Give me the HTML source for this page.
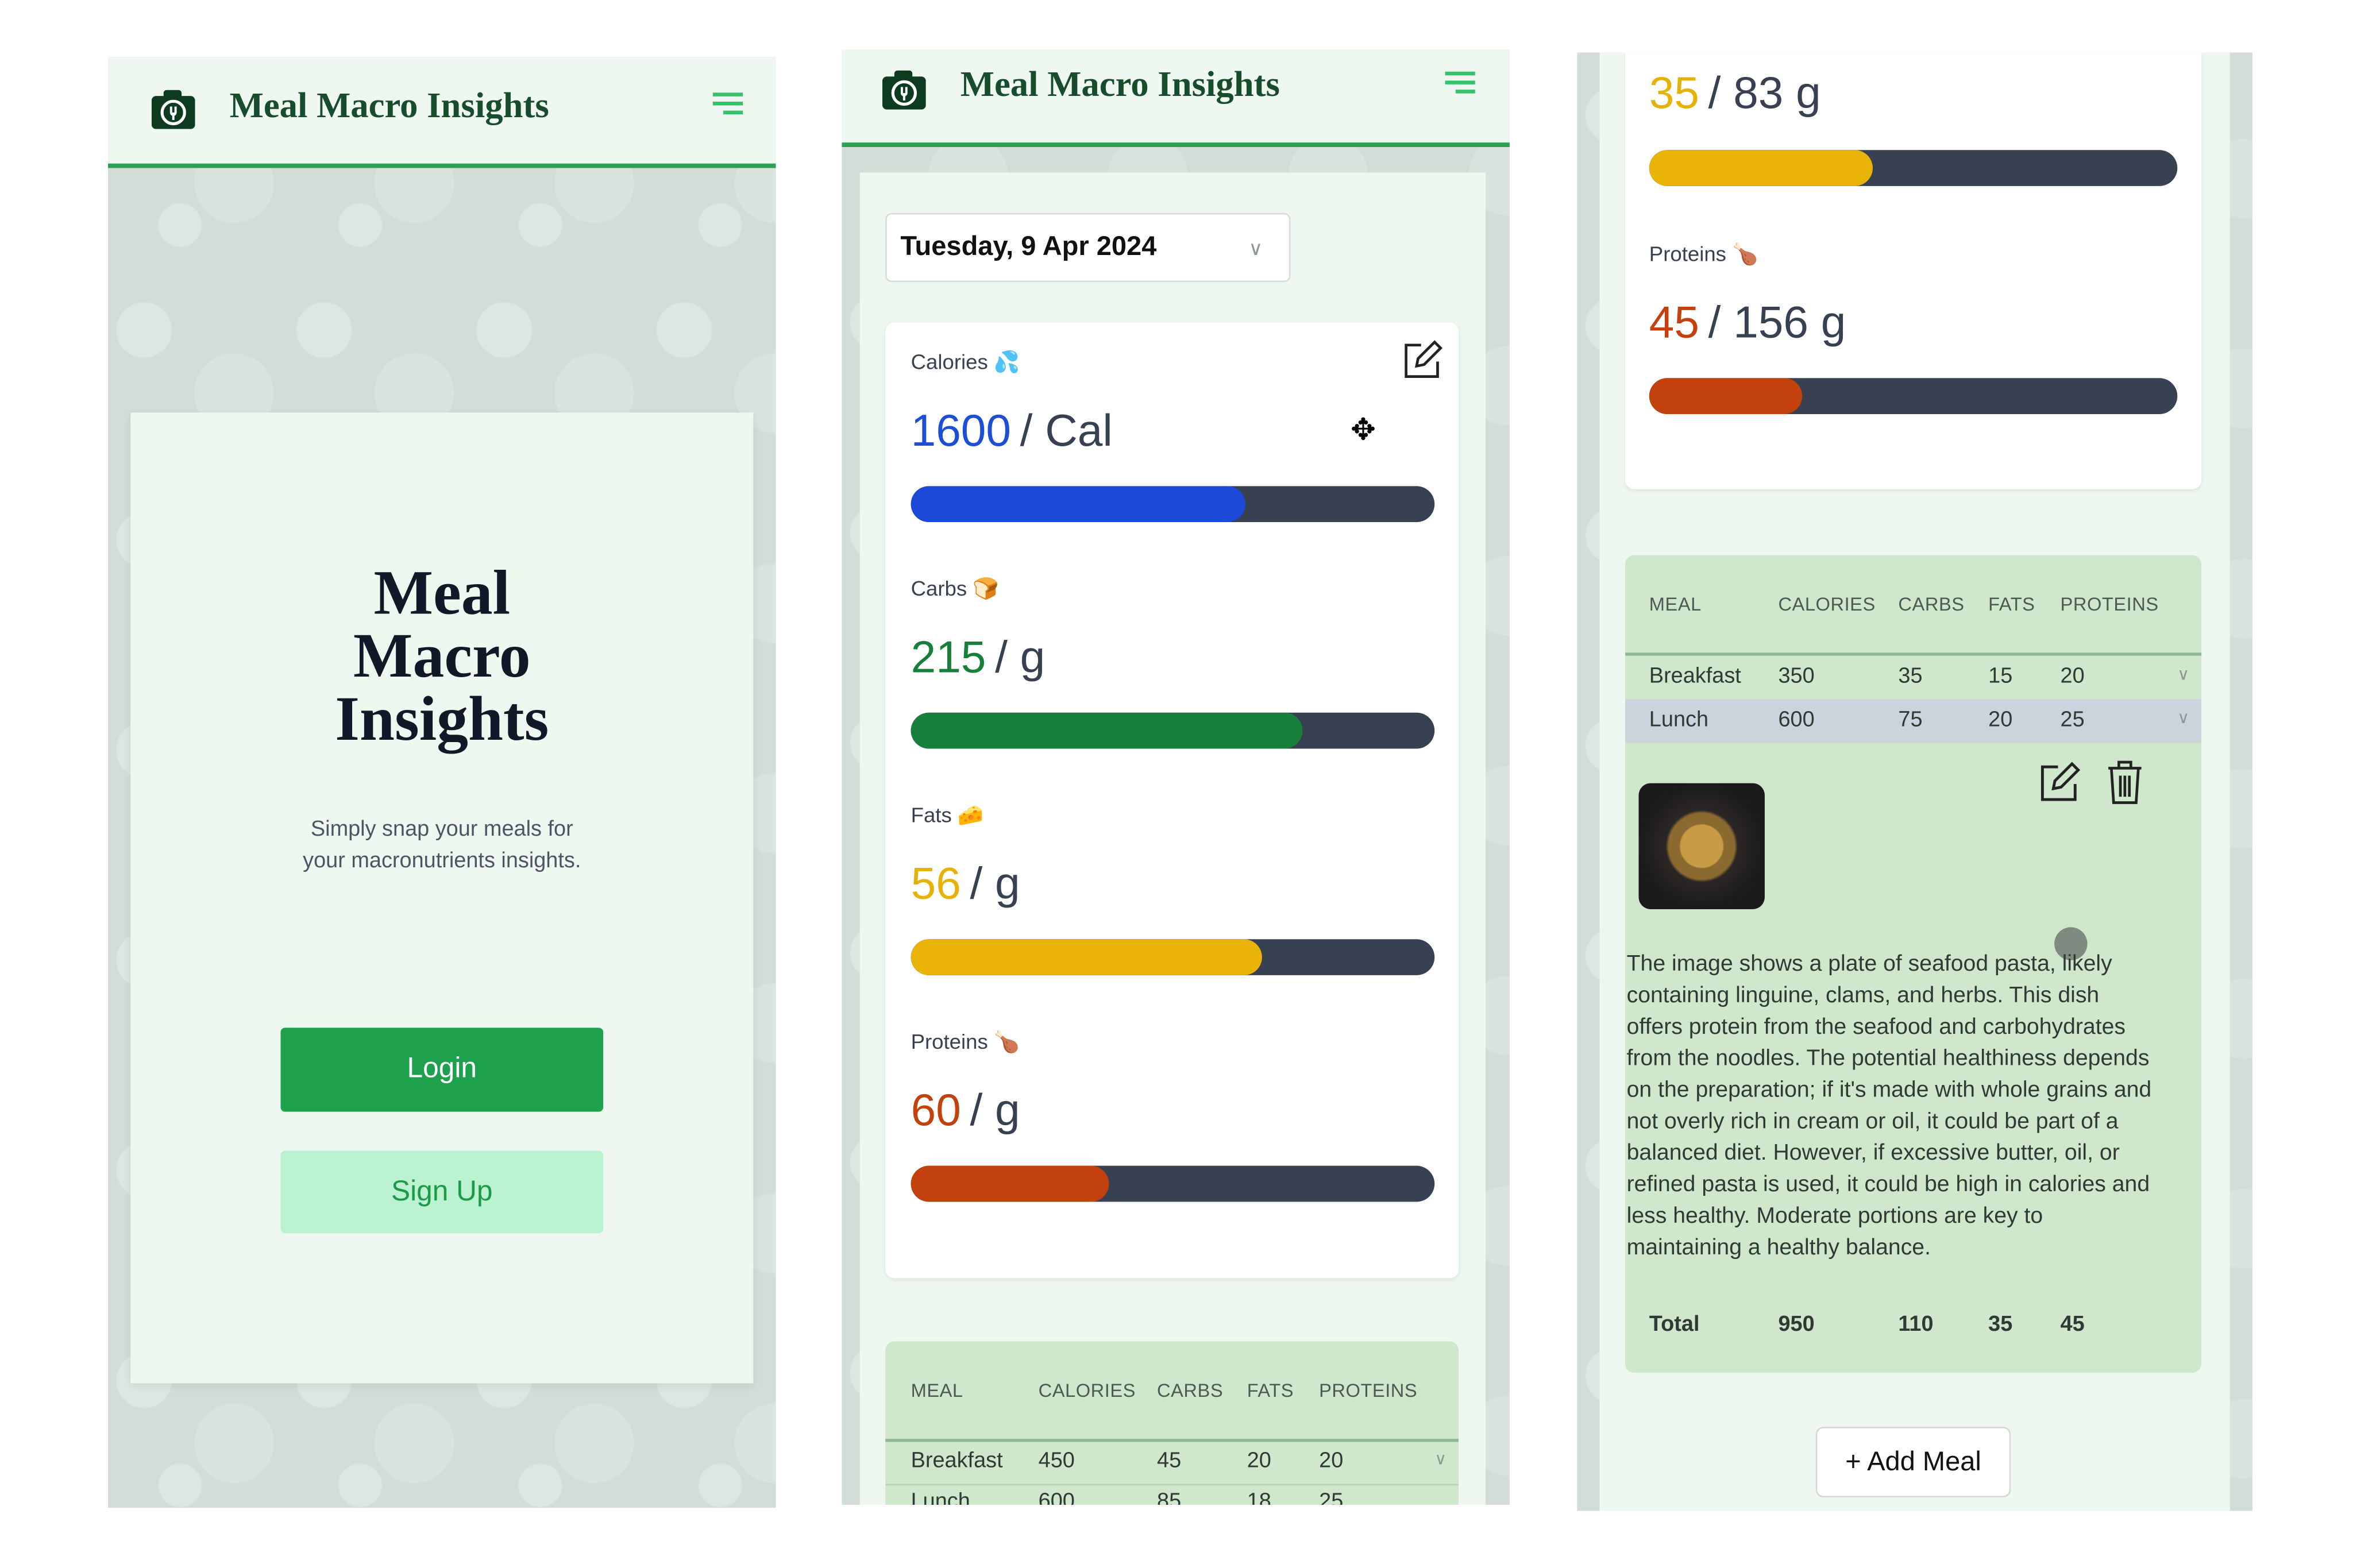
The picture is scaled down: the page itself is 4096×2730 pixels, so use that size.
<!DOCTYPE html>
<html><head><meta charset="utf-8"><style>
html,body{margin:0;padding:0;background:#fff;width:4096px;height:2730px;overflow:hidden}
#s{position:absolute;left:0;top:0;width:1568px;height:1045px;transform:scale(2.6122);transform-origin:0 0;font-family:"Liberation Sans",sans-serif}
.a{position:absolute}
.pat{background:#d3ddd8;background-image:radial-gradient(circle at 20% 30%,#dde6e1 0 18px,transparent 19px),radial-gradient(circle at 70% 60%,#dae3de 0 26px,transparent 27px),radial-gradient(circle at 40% 80%,#dde6e1 0 14px,transparent 15px);background-size:120px 140px}
.hdr{background:#eef7f0;border-bottom:3px solid #2f9e53}
.ttl{font-family:"Liberation Serif",serif;font-weight:bold;color:#174d2c;font-size:24px;white-space:nowrap}
.lbl{font-size:14px;color:#374151;white-space:nowrap}
.num{font-size:30px;color:#374151;white-space:nowrap;line-height:36px}
.bar{height:24px;border-radius:12px;background:#374151;overflow:hidden}
.bar div{height:100%;border-radius:12px}
.th{font-size:12.5px;color:#4b5a53;letter-spacing:.2px}
.td{font-size:14.5px;color:#2f3a35}
.chev{font-size:11px;color:#8a9a92}
</style></head><body><div id="s">

<!-- PANEL 1 -->
<div class="a pat" style="left:72px;top:38px;width:445px;height:967px"></div>
<div class="a hdr" style="left:72px;top:38px;width:445px;height:71px"></div>
<svg class="a" style="left:101px;top:59px" width="29" height="27" viewBox="0 0 29 27"><rect x="0" y="5" width="29" height="22" rx="3" fill="#0d3b1f"/><rect x="8" y="1" width="12" height="6" rx="2" fill="#0d3b1f"/><circle cx="14.5" cy="16" r="7.5" fill="none" stroke="#fff" stroke-width="2"/><path d="M13 12v4a1.5 1.5 0 0 0 3 0v-4M14.5 16v5" stroke="#fff" stroke-width="1.5" fill="none"/></svg>
<div class="a ttl" style="left:153px;top:58px">Meal Macro Insights</div>
<svg class="a" style="left:474px;top:61px" width="22" height="18"><path d="M1 2h20M1 8h20M8 14h13" stroke="#34c26a" stroke-width="2.5"/></svg>
<div class="a" style="left:87px;top:275px;width:415px;height:647px;background:#eef8f1;box-shadow:0 2px 6px rgba(0,0,0,.08)"></div>
<div class="a" style="left:87px;top:375px;width:415px;text-align:center;font-family:'Liberation Serif',serif;font-weight:bold;font-size:42px;line-height:42px;color:#111827">Meal<br>Macro<br>Insights</div>
<div class="a" style="left:87px;top:543px;width:415px;text-align:center;font-size:14.5px;line-height:21px;color:#4b5563">Simply snap your meals for<br>your macronutrients insights.</div>
<div class="a" style="left:187px;top:685px;width:215px;height:56px;background:#1ea14d;border-radius:3px;color:#fff;font-size:19px;line-height:56px;text-align:center">Login</div>
<div class="a" style="left:187px;top:767px;width:215px;height:55px;background:#bbf3d0;border-radius:3px;color:#1c9a48;font-size:19px;line-height:55px;text-align:center">Sign Up</div>

<!-- PANEL 2 -->
<div class="a pat" style="left:561px;top:33px;width:445px;height:970px"></div>
<div class="a hdr" style="left:561px;top:33px;width:445px;height:62px"></div>
<svg class="a" style="left:588px;top:46px" width="29" height="27" viewBox="0 0 29 27"><rect x="0" y="5" width="29" height="22" rx="3" fill="#0d3b1f"/><rect x="8" y="1" width="12" height="6" rx="2" fill="#0d3b1f"/><circle cx="14.5" cy="16" r="7.5" fill="none" stroke="#fff" stroke-width="2"/><path d="M13 12v4a1.5 1.5 0 0 0 3 0v-4M14.5 16v5" stroke="#fff" stroke-width="1.5" fill="none"/></svg>
<div class="a ttl" style="left:640px;top:44px">Meal Macro Insights</div>
<svg class="a" style="left:962px;top:47px" width="22" height="18"><path d="M1 2h20M1 8h20M8 14h13" stroke="#34c26a" stroke-width="2.5"/></svg>
<div class="a" style="left:573px;top:115px;width:417px;height:888px;background:#eef8f1"></div>
<div class="a" style="left:590px;top:142px;width:270px;height:46px;background:#fff;border:1px solid #d8ddd9;border-radius:4px;box-sizing:border-box"></div>
<div class="a" style="left:600px;top:154px;font-size:18px;font-weight:bold;color:#111">Tuesday, 9 Apr 2024</div>
<div class="a chev" style="left:832px;top:158px;font-size:13px">&#8744;</div>
<div class="a" style="left:590px;top:215px;width:382px;height:637px;background:#fff;border-radius:6px;box-shadow:0 1px 3px rgba(0,0,0,.08)"></div>
<svg class="a" style="left:935px;top:226px" width="27" height="27" viewBox="0 0 27 27" fill="none" stroke="#222" stroke-width="1.8"><path d="M12 4H2v21h21V15"/><path d="M21 2l4 4-11 11-5 1 1-5z"/></svg>
<div class="a lbl" style="left:607px;top:233px">Calories 💦</div>
<div class="a num" style="left:607px;top:270px"><span style="color:#1d4ed8">1600</span>&thinsp;/ Cal</div>
<div class="a" style="left:900px;top:274px;font-size:20px;color:#000">✥</div>
<div class="a bar" style="left:607px;top:324px;width:349px"><div style="width:223px;background:#1d48d8"></div></div>
<div class="a lbl" style="left:607px;top:384px">Carbs 🍞</div>
<div class="a num" style="left:607px;top:421px"><span style="color:#16803b">215</span>&thinsp;/ g</div>
<div class="a bar" style="left:607px;top:475px;width:349px"><div style="width:261px;background:#16803b"></div></div>
<div class="a lbl" style="left:607px;top:535px">Fats 🧀</div>
<div class="a num" style="left:607px;top:572px"><span style="color:#e6b208">56</span>&thinsp;/ g</div>
<div class="a bar" style="left:607px;top:626px;width:349px"><div style="width:234px;background:#eab308"></div></div>
<div class="a lbl" style="left:607px;top:686px">Proteins 🍗</div>
<div class="a num" style="left:607px;top:723px"><span style="color:#c2410c">60</span>&thinsp;/ g</div>
<div class="a bar" style="left:607px;top:777px;width:349px"><div style="width:132px;background:#c2410c"></div></div>
<div class="a" style="left:590px;top:894px;width:382px;height:109px;background:#cfe7cb;border-radius:6px 6px 0 0"></div>
<div class="a th" style="left:607px;top:920px">MEAL</div><div class="a th" style="left:692px;top:920px">CALORIES</div><div class="a th" style="left:771px;top:920px">CARBS</div><div class="a th" style="left:831px;top:920px">FATS</div><div class="a th" style="left:879px;top:920px">PROTEINS</div>
<div class="a" style="left:590px;top:959px;width:382px;height:2px;background:#8fb896"></div>
<div class="a td" style="left:607px;top:966px">Breakfast</div><div class="a td" style="left:692px;top:966px">450</div><div class="a td" style="left:771px;top:966px">45</div><div class="a td" style="left:831px;top:966px">20</div><div class="a td" style="left:879px;top:966px">20</div><div class="a chev" style="left:956px;top:966px">&#8744;</div>
<div class="a" style="left:590px;top:989px;width:382px;height:1px;background:#b8d3b8"></div>
<div class="a" style="left:590px;top:990px;width:382px;height:13px;overflow:hidden"><div class="a td" style="left:17px;top:3px">Lunch</div><div class="a td" style="left:102px;top:3px">600</div><div class="a td" style="left:181px;top:3px">85</div><div class="a td" style="left:241px;top:3px">18</div><div class="a td" style="left:289px;top:3px">25</div></div>

<!-- PANEL 3 -->
<div class="a pat" style="left:1051px;top:35px;width:450px;height:972px"></div>
<div class="a" style="left:1066px;top:35px;width:420px;height:972px;background:#eef8f1"></div>
<div class="a" style="left:1083px;top:35px;width:384px;height:291px;background:#fff;border-radius:0 0 6px 6px;box-shadow:0 1px 3px rgba(0,0,0,.08)"></div>
<div class="a num" style="left:1099px;top:45px"><span style="color:#e6b208">35</span>&thinsp;/ 83 g</div>
<div class="a bar" style="left:1099px;top:100px;width:352px"><div style="width:149px;background:#eab308"></div></div>
<div class="a lbl" style="left:1099px;top:161px">Proteins 🍗</div>
<div class="a num" style="left:1099px;top:198px"><span style="color:#c2410c">45</span>&thinsp;/ 156 g</div>
<div class="a bar" style="left:1099px;top:252px;width:352px"><div style="width:102px;background:#c2410c"></div></div>
<div class="a" style="left:1083px;top:370px;width:384px;height:545px;background:#cfe7cb;border-radius:6px"></div>
<div class="a th" style="left:1099px;top:396px">MEAL</div><div class="a th" style="left:1185px;top:396px">CALORIES</div><div class="a th" style="left:1265px;top:396px">CARBS</div><div class="a th" style="left:1325px;top:396px">FATS</div><div class="a th" style="left:1373px;top:396px">PROTEINS</div>
<div class="a" style="left:1083px;top:435px;width:384px;height:2px;background:#8fb896"></div>
<div class="a td" style="left:1099px;top:443px">Breakfast</div><div class="a td" style="left:1185px;top:443px">350</div><div class="a td" style="left:1265px;top:443px">35</div><div class="a td" style="left:1325px;top:443px">15</div><div class="a td" style="left:1373px;top:443px">20</div><div class="a chev" style="left:1451px;top:443px">&#8744;</div>
<div class="a" style="left:1083px;top:466px;width:384px;height:29px;background:#cdd3dc"></div>
<div class="a td" style="left:1099px;top:472px">Lunch</div><div class="a td" style="left:1185px;top:472px">600</div><div class="a td" style="left:1265px;top:472px">75</div><div class="a td" style="left:1325px;top:472px">20</div><div class="a td" style="left:1373px;top:472px">25</div><div class="a chev" style="left:1451px;top:472px">&#8744;</div>
<svg class="a" style="left:1359px;top:507px" width="28" height="28" viewBox="0 0 27 27" fill="none" stroke="#222" stroke-width="1.8"><path d="M12 4H2v21h21V15"/><path d="M21 2l4 4-11 11-5 1 1-5z"/></svg>
<svg class="a" style="left:1404px;top:506px" width="24" height="30" viewBox="0 0 24 30" fill="none" stroke="#222" stroke-width="1.8"><path d="M1 6h22M8 6V2h8v4M3 6l1.5 23h15L21 6M9 11v14M12 11v14M15 11v14"/></svg>
<div class="a" style="left:1092px;top:522px;width:84px;height:84px;border-radius:8px;background:radial-gradient(circle at 50% 50%,#c99b45 0 14px,#8a6a2f 15px 22px,#2a2625 24px,#1b1a1a 42px)"></div>
<div class="a" style="left:1369px;top:618px;width:22px;height:22px;border-radius:50%;background:#7f8a80"></div>
<div class="a" style="left:1084px;top:632px;width:352px;font-size:15px;line-height:21px;color:#2f3a35">The image shows a plate of seafood pasta, likely containing linguine, clams, and herbs. This dish offers protein from the seafood and carbohydrates from the noodles. The potential healthiness depends on the preparation; if it's made with whole grains and not overly rich in cream or oil, it could be part of a balanced diet. However, if excessive butter, oil, or refined pasta is used, it could be high in calories and less healthy. Moderate portions are key to maintaining a healthy balance.</div>
<div class="a td" style="left:1099px;top:875px;font-weight:bold">Total</div><div class="a td" style="left:1185px;top:875px;font-weight:bold">950</div><div class="a td" style="left:1265px;top:875px;font-weight:bold">110</div><div class="a td" style="left:1325px;top:875px;font-weight:bold">35</div><div class="a td" style="left:1373px;top:875px;font-weight:bold">45</div>
<div class="a" style="left:1210px;top:951px;width:130px;height:47px;background:#fff;border:1px solid #d4d9d6;border-radius:5px;box-sizing:border-box;text-align:center;line-height:45px;font-size:18px;color:#111">+ Add Meal</div>
</div></body></html>
